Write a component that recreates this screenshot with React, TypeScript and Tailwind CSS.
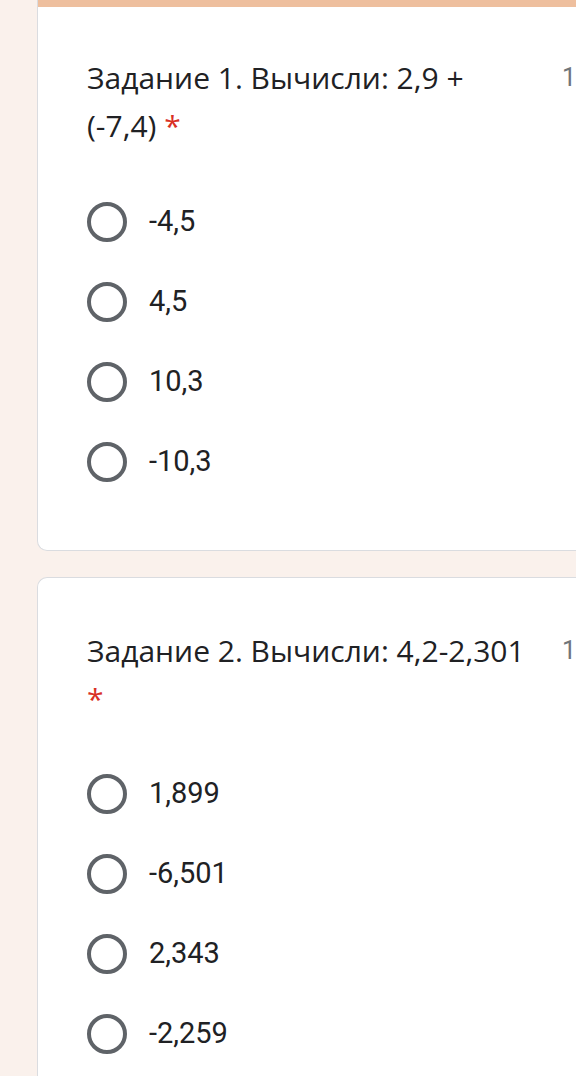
import React from "react";

const Radio = ({ label }: { label: string }) => (
  <div className="flex h-[80px] items-center">
    <div className="ml-[49px] box-border h-[40px] w-[40px] rounded-full border-[4px] border-[#5f6368]" />
    <span className="ml-[22px] text-[29px] text-[#202124]" style={{ fontFamily: "Roboto, sans-serif" }}>
      {label}
    </span>
  </div>
);

const Title = ({ l1, l2 }: { l1: string; l2: string }) => (
  <div className="flex">
    <div
      className="ml-[49px] w-[460px] shrink-0 text-[30px] leading-[48px] text-[#202124]"
      style={{ fontFamily: "'Open Sans', sans-serif" }}
    >
      {l1}
      <br />
      {l2 && <span>{l2} </span>}
      <span className="text-[#d93025]">*</span>
    </div>
    <div
      className="ml-[15px] shrink-0 whitespace-nowrap text-[25px] leading-[48px] text-[#70757a]"
      style={{ fontFamily: "Roboto, sans-serif" }}
    >
      1 балл
    </div>
  </div>
);

export default function App() {
  return (
    <div className="h-[1076px] w-[576px] overflow-hidden bg-[#faf1ec]">
      <div className="ml-[37px] w-[600px] overflow-hidden rounded-b-[10px] border-b border-l border-[#dadce0] bg-white">
        <div className="h-[7px] bg-[#eebf9e]" />
        <div className="pt-[47px]">
          <Title l1="Задание 1. Вычисли: 2,9 +" l2="(-7,4)" />
        </div>
        <div className="mt-[32px] pb-[48px]">
          <Radio label="-4,5" />
          <Radio label="4,5" />
          <Radio label="10,3" />
          <Radio label="-10,3" />
        </div>
      </div>
      <div className="mt-[26px] ml-[37px] w-[600px] overflow-hidden rounded-t-[10px] border-t border-l border-[#dadce0] bg-white">
        <div className="pt-[49px]">
          <Title l1="Задание 2. Вычисли: 4,2-2,301" l2="" />
        </div>
        <div className="mt-[31px] pb-[48px]">
          <Radio label="1,899" />
          <Radio label="-6,501" />
          <Radio label="2,343" />
          <Radio label="-2,259" />
        </div>
      </div>
    </div>
  );
}
